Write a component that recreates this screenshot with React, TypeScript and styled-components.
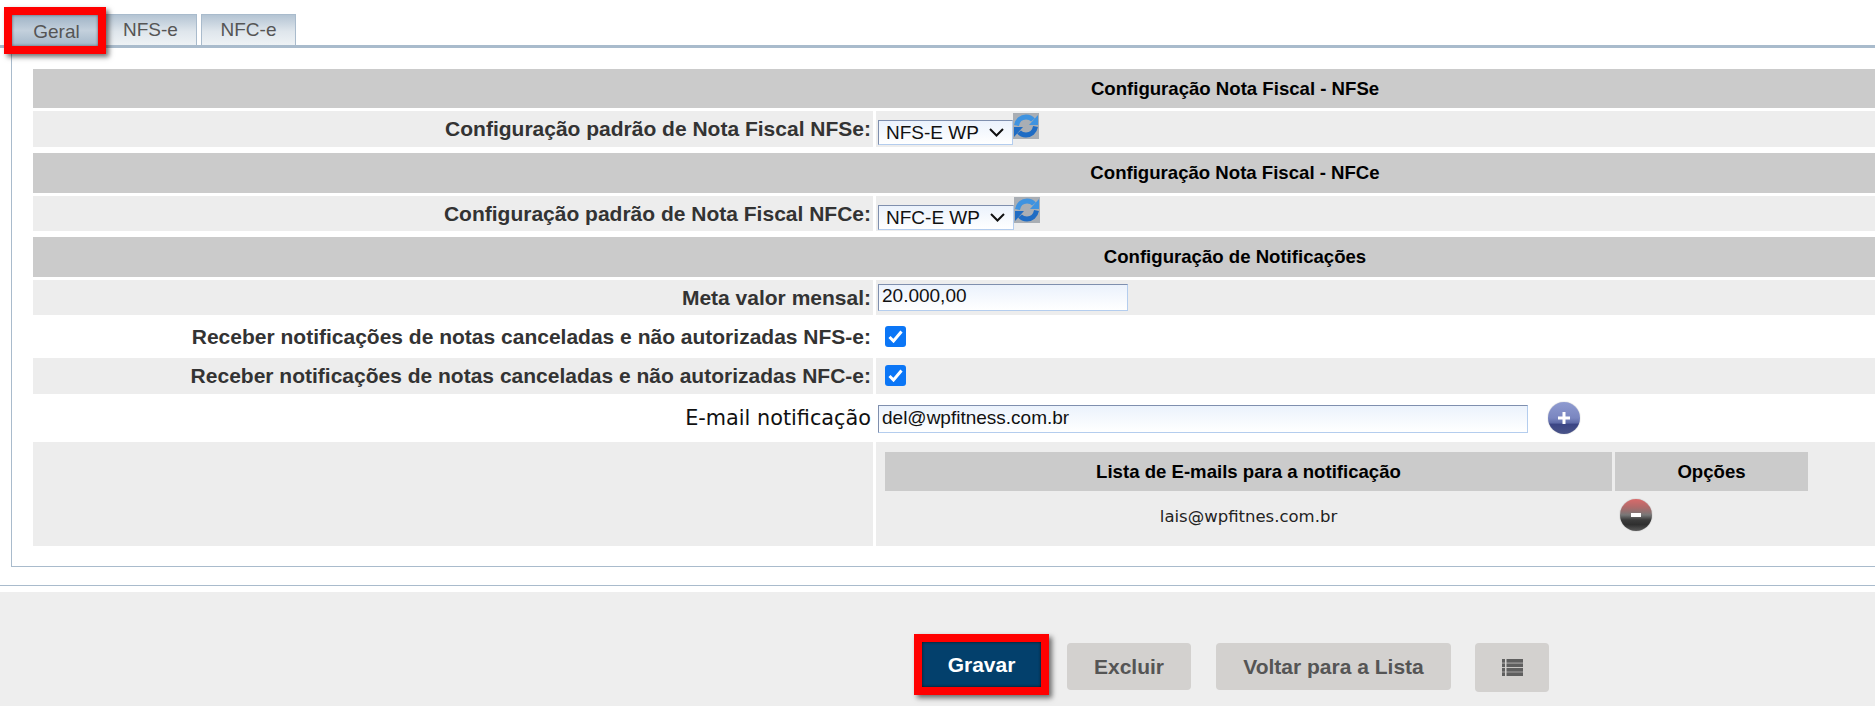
import React from 'react';
import styled, { createGlobalStyle, css } from 'styled-components';

const GlobalStyle = createGlobalStyle`
  html, body {
    margin: 0;
    padding: 0;
    height: 706px;
    overflow: hidden;
    background: #fff;
    font-family: "Liberation Sans", Arial, sans-serif;
  }
`;

const Page = styled.div`
  width: 1875px;
  height: 706px;
  overflow: hidden;
`;

const TabBar = styled.div`
  display: flex;
  align-items: flex-end;
  height: 45px;
  padding-left: 12px;
  border-bottom: 3px solid #a9bbcc;
`;

const Tab = styled.div<{ $active?: boolean; $width: number; $gap: number }>`
  box-sizing: border-box;
  width: ${(p) => p.$width}px;
  margin-right: ${(p) => p.$gap}px;
  height: 31px;
  padding-bottom: 1px;
  display: flex;
  align-items: center;
  justify-content: center;
  font-size: 19px;
  color: #555;
  border: 1px solid #a9bbcc;
  border-bottom: 0;
  background: linear-gradient(#b4c4d3, #dfe6ec 55%, #eef2f5);
  ${(p) =>
    p.$active &&
    css`
      margin-bottom: -1px;
      padding: 3px 0 0 3px;
      background: linear-gradient(#9fb3c6, #c3d0dc 50%, #a3b7c9);
      box-shadow:
        inset 0 0 3px #55606a,
        0 0 0 8px #f00,
        3px 3px 5px 8px rgba(0, 0, 0, 0.55);
      position: relative;
      border: 0;
    `}
`;

const Panel = styled.div`
  margin-left: 11px;
  padding: 21px 0 20px 21px;
  border-left: 1px solid #a9bbcc;
  border-bottom: 1px solid #a9bbcc;
`;

const FormTable = styled.div`
  width: 2404px;
  display: flex;
  flex-direction: column;
`;

const SectionHeader = styled.div<{ $height: number; $gap: number }>`
  height: ${(p) => p.$height}px;
  margin-bottom: ${(p) => p.$gap}px;
  background: #cbcbcb;
  display: flex;
  align-items: center;
  justify-content: center;
  font-size: 18.6px;
  font-weight: bold;
  color: #000;
`;

const Row = styled.div<{ $height: number; $after?: number }>`
  display: grid;
  grid-template-columns: 840px 1fr;
  column-gap: 3px;
  height: ${(p) => p.$height}px;
  margin-bottom: ${(p) => p.$after ?? 0}px;
  background: #fff;
`;

const Label = styled.div<{ $shaded?: boolean; $plain?: boolean }>`
  display: flex;
  align-items: center;
  justify-content: flex-end;
  padding-right: 2px;
  background: ${(p) => (p.$shaded ? '#ededed' : '#fff')};
  font-size: 21px;
  font-weight: bold;
  color: #333;
  ${(p) =>
    p.$plain &&
    css`
      font-family: "DejaVu Sans", sans-serif;
      font-weight: normal;
      font-size: 20.8px;
      color: #111;
    `}
`;

const Value = styled.div<{ $shaded?: boolean }>`
  display: flex;
  align-items: flex-start;
  padding-left: 2px;
  background: ${(p) => (p.$shaded ? '#ededed' : '#fff')};
`;

const fieldLook = css`
  box-sizing: border-box;
  font-family: "Liberation Sans", Arial, sans-serif;
  font-size: 19px;
  color: #111;
  background: linear-gradient(#ebf2fc, #fff);
  border: 1px solid #b4cdee;
  border-top-color: #7f8fae;
  border-left-color: #7f8fae;
`;

const FakeSelect = styled.div<{ $top: number; $width: number }>`
  ${fieldLook}
  width: ${(p) => p.$width}px;
  height: 25px;
  margin-top: ${(p) => p.$top}px;
  padding: 0 8px 0 7px;
  display: flex;
  align-items: center;
  justify-content: space-between;
`;

const TextField = styled.div<{ $top: number; $width: number; $height: number }>`
  ${fieldLook}
  width: ${(p) => p.$width}px;
  height: ${(p) => p.$height}px;
  margin-top: ${(p) => p.$top}px;
  padding: 0 3px;
  line-height: ${(p) => p.$height - 5}px;
`;

const RefreshBox = styled.div<{ $top: number }>`
  width: 26px;
  height: 26px;
  margin-top: ${(p) => p.$top}px;
  background: #a9aeb4;
`;

const CheckBox = styled.div<{ $top: number }>`
  width: 21px;
  height: 21px;
  margin: ${(p) => p.$top}px 0 0 7px;
  border-radius: 3px;
  background: #0b76f6;
  display: flex;
  align-items: center;
  justify-content: center;
`;

const RoundIcon = styled.div<{ $kind: 'plus' | 'minus' }>`
  width: 32px;
  height: 32px;
  border-radius: 50%;
  color: #fff;
  display: flex;
  align-items: center;
  justify-content: center;
  box-shadow: 0 0 1px rgba(0, 0, 0, 0.5);
  background: ${(p) =>
    p.$kind === 'plus'
      ? 'linear-gradient(#8f9bd0, #7a86c0 50%, #5f6ba8 65%, #3b4585 70%, #4a5488)'
      : 'linear-gradient(#d96a6a, #b06a6a 25%, #777 50%, #3c3c3c 65%, #2f2f2f 80%, #5a5a5a)'};
`;

const AddIcon = styled(RoundIcon)`
  margin: 8px 0 0 20px;
`;

const EmailList = styled.div`
  margin: 10px 0 0 7px;
  display: grid;
  grid-template-columns: 727px 193px;
  grid-template-rows: 39px 55px;
  column-gap: 3px;
`;

const ListHead = styled.div`
  background: #cbcbcb;
  display: flex;
  align-items: center;
  justify-content: center;
  font-size: 18.6px;
  font-weight: bold;
  color: #000;
`;

const ListCell = styled.div`
  display: flex;
  align-items: center;
  justify-content: center;
  font-family: "DejaVu Sans", sans-serif;
  font-size: 16.5px;
  color: #222;
  padding-bottom: 4px;
`;

const OptionsCell = styled.div`
  padding: 8px 0 0 5px;
`;

const Divider = styled.div`
  margin-top: 18px;
  height: 1px;
  background: #a9bbcc;
`;

const Footer = styled.div`
  margin-top: 6px;
  height: 114px;
  background: #eee;
  display: flex;
  align-items: flex-start;
  padding: 51px 0 0 922px;
  box-sizing: border-box;
`;

const Button = styled.div<{ $primary?: boolean; $width: number; $gap: number; $height?: number }>`
  box-sizing: border-box;
  width: ${(p) => p.$width}px;
  height: ${(p) => p.$height ?? 47}px;
  margin-right: ${(p) => p.$gap}px;
  border-radius: 4px;
  background: #d3d1cf;
  color: #555;
  font-size: 21px;
  font-weight: bold;
  display: flex;
  align-items: center;
  justify-content: center;
  ${(p) =>
    p.$primary &&
    css`
      height: 45px;
      margin-top: -1px;
      border-radius: 0;
      background: #03406c;
      color: #fff;
      box-shadow:
        inset 0 0 3px #111,
        0 0 0 8px #f00,
        3px 3px 5px 8px rgba(0, 0, 0, 0.55);
    `}
`;

const Chevron = () => (
  <svg width="15" height="9" viewBox="0 0 15 9">
    <path d="M1 1l6.5 6.5L14 1" fill="none" stroke="#111" strokeWidth="2" />
  </svg>
);

const RefreshIcon = () => (
  <svg width="26" height="26" viewBox="0 0 26 26">
    <path d="M3.5 12.5C4.5 7 8.5 4 13 4c3 0 5.5 1.2 7 3" fill="none" stroke="#3f93e0" strokeWidth="5" />
    <path d="M25 2v10h-9z" fill="#3f93e0" />
    <path d="M22.5 13.5c-1 5.5-5 8.5-9.5 8.5-3 0-5.5-1.2-7-3" fill="none" stroke="#1f6cc4" strokeWidth="5" />
    <path d="M1 24V14h9z" fill="#1f6cc4" />
  </svg>
);

const Check = () => (
  <svg width="15" height="13" viewBox="0 0 15 13">
    <path d="M1.5 7l4 4L13.5 1.5" fill="none" stroke="#fff" strokeWidth="3" />
  </svg>
);

const ListIcon = () => (
  <svg width="21" height="17" viewBox="0 0 21 17" fill="#5f5f5f">
    {[0, 4.4, 9, 13.3].map((y) => (
      <React.Fragment key={y}>
        <rect x="0" y={y} width="3" height="3.7" />
        <rect x="4.5" y={y} width="16.5" height="3.7" />
      </React.Fragment>
    ))}
  </svg>
);

const PlusGlyph = () => (
  <svg width="14" height="14" viewBox="0 0 14 14" fill="#fff">
    <rect x="5.5" y="1" width="3" height="12" />
    <rect x="1" y="5.5" width="12" height="3" />
  </svg>
);

const MinusGlyph = () => (
  <svg width="10" height="4" viewBox="0 0 10 4" fill="#fff">
    <rect width="10" height="4" />
  </svg>
);

export default function App() {
  return (
    <Page>
      <GlobalStyle />
      <TabBar>
        <Tab $active $width={86} $gap={6}>Geral</Tab>
        <Tab $width={93} $gap={4}>NFS-e</Tab>
        <Tab $width={95} $gap={0}>NFC-e</Tab>
      </TabBar>
      <Panel>
        <FormTable>
          <SectionHeader $height={39} $gap={3}>Configuração Nota Fiscal - NFSe</SectionHeader>
          <Row $height={36} $after={6}>
            <Label $shaded>Configuração padrão de Nota Fiscal NFSe:</Label>
            <Value $shaded>
              <FakeSelect $top={9} $width={135}>NFS-E WP <Chevron /></FakeSelect>
              <RefreshBox $top={2}><RefreshIcon /></RefreshBox>
            </Value>
          </Row>
          <SectionHeader $height={40} $gap={3}>Configuração Nota Fiscal - NFCe</SectionHeader>
          <Row $height={35} $after={6}>
            <Label $shaded>Configuração padrão de Nota Fiscal NFCe:</Label>
            <Value $shaded>
              <FakeSelect $top={9} $width={136}>NFC-E WP <Chevron /></FakeSelect>
              <RefreshBox $top={1}><RefreshIcon /></RefreshBox>
            </Value>
          </Row>
          <SectionHeader $height={40} $gap={3}>Configuração de Notificações</SectionHeader>
          <Row $height={35}>
            <Label $shaded>Meta valor mensal:</Label>
            <Value $shaded>
              <TextField $top={4} $width={250} $height={27}>20.000,00</TextField>
            </Value>
          </Row>
          <Row $height={43}>
            <Label>Receber notificações de notas canceladas e não autorizadas NFS-e:</Label>
            <Value>
              <CheckBox $top={11}><Check /></CheckBox>
            </Value>
          </Row>
          <Row $height={36}>
            <Label $shaded>Receber notificações de notas canceladas e não autorizadas NFC-e:</Label>
            <Value $shaded>
              <CheckBox $top={7}><Check /></CheckBox>
            </Value>
          </Row>
          <Row $height={48}>
            <Label $plain>E-mail notificação</Label>
            <Value>
              <TextField $top={11} $width={650} $height={28}>del@wpfitness.com.br</TextField>
              <AddIcon $kind="plus"><PlusGlyph /></AddIcon>
            </Value>
          </Row>
          <Row $height={104}>
            <Label $shaded />
            <Value $shaded>
              <EmailList>
                <ListHead>Lista de E-mails para a notificação</ListHead>
                <ListHead>Opções</ListHead>
                <ListCell>lais@wpfitnes.com.br</ListCell>
                <OptionsCell>
                  <RoundIcon $kind="minus"><MinusGlyph /></RoundIcon>
                </OptionsCell>
              </EmailList>
            </Value>
          </Row>
        </FormTable>
      </Panel>
      <Divider />
      <Footer>
        <Button $primary $width={119} $gap={26}>Gravar</Button>
        <Button $width={124} $gap={25}>Excluir</Button>
        <Button $width={235} $gap={24}>Voltar para a Lista</Button>
        <Button $width={74} $gap={0} $height={49}><ListIcon /></Button>
      </Footer>
    </Page>
  );
}
